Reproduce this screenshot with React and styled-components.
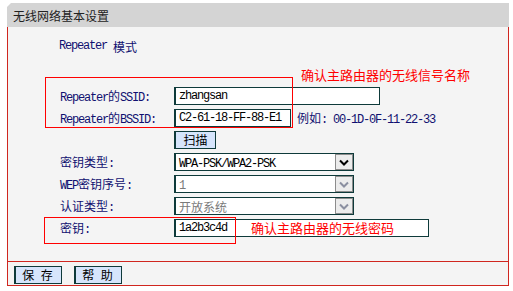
import React from 'react';
import styled, { createGlobalStyle } from 'styled-components';

const GlobalStyle = createGlobalStyle`
  body {
    margin: 0;
    background: #fff;
    font-family: "Noto Sans CJK SC", sans-serif;
  }
`;

const Panel = styled.div`
  margin: 3px 0 0 7px;
  width: 502px;
`;

const Header = styled.div`
  height: 24px;
  background: #d4d4d4;
  clip-path: polygon(4px 0, 100% 0, 100% 100%, 0 100%, 0 4px);
  padding-left: 6px;
  display: flex;
  align-items: center;
  font-size: 12px;
  color: #222;
`;

const Body = styled.div`
  border: 1px solid #d0261f;
  border-top: none;
  background: #f4f4f4;
`;

const Content = styled.div`
  position: relative;
  height: 234px;
  box-sizing: border-box;
  padding: 8px 0 0 52px;
`;

const Title = styled.div`
  height: 22px;
  display: flex;
  align-items: center;
  margin-left: -1px;
  color: #101070;
  font-size: 12px;
  white-space: pre;
`;

const Form = styled.div`
  margin-top: 28px;
  display: grid;
  grid-template-columns: 114px 1fr;
  grid-auto-rows: 22px;
  align-items: center;
`;

const Label = styled.div`
  color: #101070;
  font-size: 12px;
  white-space: nowrap;
`;

const Mono = styled.span`
  font-family: "Liberation Mono", monospace;
  font-size: 12px;
  letter-spacing: -1.2px;
`;

const Field = styled.div`
  display: flex;
  align-items: center;
  gap: 6px;
`;

const TextBox = styled.input`
  width: ${p => p.$w}px;
  height: 18px;
  box-sizing: border-box;
  margin: 0;
  padding: 0 0 0 3px;
  border: 1px solid #0e3a3a;
  border-left-width: 2px;
  background: #fff;
  color: #000;
  font-family: "Liberation Mono", monospace;
  font-size: 12px;
  letter-spacing: -1.2px;
  outline: none;
`;

const Hint = styled.span`
  color: #101070;
  font-size: 12px;
  white-space: nowrap;
`;

const SmallButton = styled.button`
  width: ${p => p.$w}px;
  height: 18px;
  box-sizing: border-box;
  margin: 0;
  padding: 0;
  border: 1px solid #0e3a3a;
  border-left-width: 2px;
  background: #d6e5fc;
  color: #000;
  font-family: "Noto Sans CJK SC", sans-serif;
  font-size: 12px;
  line-height: 16px;
  white-space: pre;
  letter-spacing: ${p => (p.$wide ? '2px' : '0')};
`;

const Select = styled.div`
  width: 180px;
  height: 18px;
  box-sizing: border-box;
  border: 1px solid #0e3a3a;
  border-left-width: 2px;
  background: #fff;
  display: flex;
  align-items: center;
  justify-content: space-between;
  padding-left: 3px;
  color: ${p => (p.$disabled ? '#7a7a7a' : '#000')};
  font-size: 12px;
`;

const ArrowBox = styled.div`
  width: 18px;
  height: 16px;
  box-sizing: border-box;
  border: 1px solid #8c8c8c;
  background: #ececec;
  display: flex;
  align-items: center;
  justify-content: center;
`;

const Note = styled.div`
  position: absolute;
  left: ${p => p.$x}px;
  top: ${p => p.$y}px;
  color: #ff0000;
  font-size: 13px;
  line-height: 16px;
  white-space: nowrap;
`;

const Mark = styled.div`
  position: absolute;
  left: ${p => p.$x}px;
  top: ${p => p.$y}px;
  width: ${p => p.$w}px;
  height: ${p => p.$h}px;
  border: 1px solid #ff0000;
  box-sizing: border-box;
  pointer-events: none;
`;

const ButtonBar = styled.div`
  border-top: 1px solid #d0261f;
  height: 24px;
  box-sizing: border-box;
  padding: 4px 0 0 6px;
  display: flex;
  gap: 12px;
`;

const Chevron = ({ dim }) => (
  <svg width="10" height="7" viewBox="0 0 10 7">
    <polyline
      points="1,1.5 5,5.5 9,1.5"
      fill="none"
      stroke={dim ? '#8a8fa0' : '#000'}
      strokeWidth="2"
    />
  </svg>
);

const SelectField = ({ children, disabled }) => (
  <Select $disabled={disabled}>
    <span>{children}</span>
    <ArrowBox>
      <Chevron dim={disabled} />
    </ArrowBox>
  </Select>
);

export default function App() {
  return (
    <>
      <GlobalStyle />
      <Panel>
        <Header>无线网络基本设置</Header>
        <Body>
          <Content>
            <Title>
              <Mono>Repeater </Mono>模式
            </Title>
            <Form>
              <Label>
                <Mono>Repeater</Mono>的<Mono>SSID:</Mono>
              </Label>
              <Field>
                <TextBox $w={206} readOnly value="zhangsan" />
              </Field>

              <Label>
                <Mono>Repeater</Mono>的<Mono>BSSID:</Mono>
              </Label>
              <Field>
                <TextBox $w={117} readOnly value="C2-61-18-FF-88-E1" />
                <Hint>
                  例如<Mono>: 00-1D-0F-11-22-33</Mono>
                </Hint>
              </Field>

              <span />
              <Field>
                <SmallButton $w={42}>扫描</SmallButton>
              </Field>

              <Label>
                密钥类型<Mono>:</Mono>
              </Label>
              <Field>
                <SelectField>
                  <Mono>WPA-PSK/WPA2-PSK</Mono>
                </SelectField>
              </Field>

              <Label>
                <Mono>WEP</Mono>密钥序号<Mono>:</Mono>
              </Label>
              <Field>
                <SelectField disabled>
                  <Mono>1</Mono>
                </SelectField>
              </Field>

              <Label>
                认证类型<Mono>:</Mono>
              </Label>
              <Field>
                <SelectField disabled>开放系统</SelectField>
              </Field>

              <Label>
                密钥<Mono>:</Mono>
              </Label>
              <Field>
                <TextBox $w={255} readOnly value="1a2b3c4d" />
              </Field>
            </Form>

            <Note $x={293} $y={40}>确认主路由器的无线信号名称</Note>
            <Mark $x={37} $y={50} $w={248} $h={51} />
            <Mark $x={36} $y={190} $w={192} $h={27} />
            <Note $x={243} $y={193}>确认主路由器的无线密码</Note>
          </Content>
          <ButtonBar>
            <SmallButton $w={48} $wide>保 存</SmallButton>
            <SmallButton $w={48} $wide>帮 助</SmallButton>
          </ButtonBar>
        </Body>
      </Panel>
    </>
  );
}
